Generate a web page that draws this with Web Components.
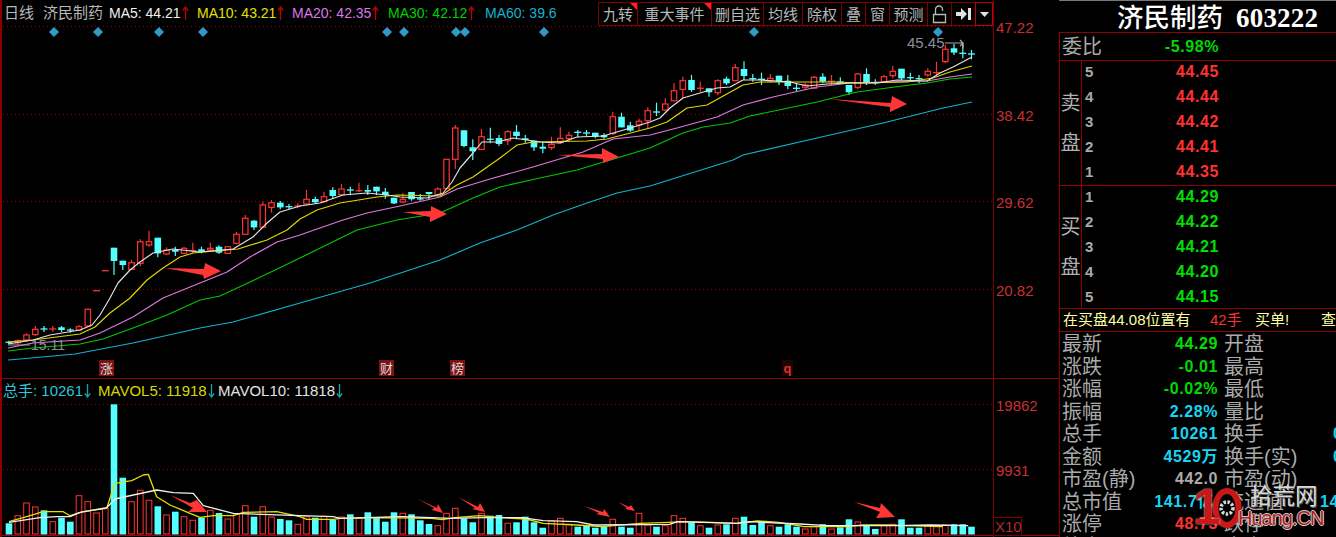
<!DOCTYPE html>
<html lang="zh"><head><meta charset="utf-8"><title>济民制药 603222</title>
<style>html,body{margin:0;padding:0;background:#000;overflow:hidden;height:537px}</style></head>
<body><x-app></x-app>
<script>
const CJK='"Liberation Sans","Noto Sans CJK SC",sans-serif';
const NS='http://www.w3.org/2000/svg';
function base(name,css,html){
  customElements.define(name,class extends HTMLElement{
    connectedCallback(){ if(this.shadowRoot)return;
      const r=this.attachShadow({mode:'open'});
      r.innerHTML='<style>'+css+'</style>'+(typeof html==='function'?html(this):html);
    }
  });
}
const STEP=8.75,X0=9; const xi=i=>X0+STEP*i;
const C6=`c 427 427 422 432|r 422 428 418 435|r 405 420 400 425|r 388 404 378 408|c 387 387 378 396|r 387 387 378 396|c 382 390 378 396|c 390 392 385 398|r 380 390 375 392|r 328 378 326 382|r 272 272 272 272|r 212 212 212 212|c 143 183 143 225|c 182 195 182 210|r 188 208 180 210|r 125 190 118 198|r 125 135 92 140|c 113 160 113 172|r 150 162 142 165|c 150 155 140 168|r 145 160 140 162|r 152 152 128 160|c 148 155 140 160|r 145 150 128 155|c 140 158 136 162|r 140 160 138 163|r 103 130 95 133|r 55 103 45 105|c 62 82 60 90|r 15 82 5 85|r 8 22 0 38|c 8 22 3 28|c 20 20 12 28|r 18 18 10 25`;
const C9=`r 298 312 270 315|c 297 307 290 312|r 290 305 275 308|c 270 288 262 296|r 267 284 252 286|c 270 270 260 285|r 272 272 248 276|c 270 275 255 285|c 260 274 260 285|c 275 285 264 296|c 293 310 293 312|r 298 306 280 310|c 276 298 276 302|c 295 299 282 302|c 276 282 276 298|r 267 285 262 287|r 178 266 178 268|r 84 178 75 207|c 91 138 91 142|c 142 154 118 180|r 110 148 87 150|c 118 118 83 130|c 114 132 105 138|r 95 122 90 135|c 95 108 75 118|c 115 120 105 128|c 122 142 122 153|c 140 146 125 160|r 133 143 110 150|r 115 128 82 132|r 106 116 95 122|c 97 97 90 112|c 99 99 90 108|c 98 110 98 115|c 105 112 100 116|r 50 100 35 105|c 50 82 38 82|c 76 92 65 95|r 64 75 56 92|r 32 62 22 85`;
const C10=`c 246 246 218 258|r 222 240 205 242|r 182 212 160 214|r 152 178 140 205|c 150 180 135 186|r 175 175 155 185|c 175 187 175 200|r 152 188 148 195|c 146 160 140 165|r 113 152 102 154|c 117 138 94 150|c 146 146 132 155|c 148 148 128 165|r 145 153 132 158|c 137 155 137 165|c 152 168 135 178|c 175 175 160 184|r 165 172 158 180|r 142 175 138 177|c 140 155 130 160|r 154 154 135 165|c 156 156 142 160|c 165 187 165 195|r 132 172 128 178|c 132 158 115 165|c 156 160 148 164|r 140 155 135 157|r 124 137 108 145|c 116 145 116 150|c 143 143 128 150|c 146 146 135 160|r 124 135 115 140|r 128 128 95 135|r 58 95 45 100|c 55 68 42 75|c 70 70 40 85|c 72 72 60 88`;
function parse(s,off){return s.split('|').map(r=>{const p=r.split(' ');return{t:p[0],a:off+p[1]/3,b:off+p[2]/3,h:off+p[3]/3,l:off+p[4]/3}})}
const CANDLES=[...parse(C6,200),...parse(C9,100),...parse(C10,30)];
const VOL=[445,422,384,396,406,440,428,440,362,380,414,400,88,308,380,346,376,394,420,410,425,436,428,406,414,432,416,392,425,395,426,432,436,448,425,428,424,434,426,418,430,412,428,440,412,
415,418,436,447,452,415,400,430,442,415,422,420,445,442,425,442,458,438,430,448,455,450,458,455,433,455,458,415,450,455,452,422,430,442,452,458,450,448,430,425,450,440,452,455,448,455,462,455,448,462,457,433,441,452,462,452,448,433,458,458,452,455,450,448,448,455];
const RED='#ff3232',CY='#54ffff';
const pts=a=>a.map(p=>p.join(',')).join(' ');
function z(list,sx,ox,sy,oy){const o=[];for(let i=0;i<list.length;i+=2)o.push([+(ox+list[i]/sx).toFixed(1),+(oy+list[i+1]/sy).toFixed(1)]);return o}
function poly(points,color,w){return `<polyline points="${pts(points)}" fill="none" stroke="${color}" stroke-width="${w||1.15}" stroke-linejoin="round"/>`}
function arrow(p,c){return `<polygon points="${pts(p)}" fill="${c||'#ff3636'}"/>`}
function dotted(y){return `<line x1="3" x2="993" y1="${y}" y2="${y}" stroke="#900000" stroke-width="1" stroke-dasharray="1 3"/>`}
const up=c=>`<svg style="position:static;display:inline-block;vertical-align:-2px;margin-left:1px" width="7" height="14" viewBox="0 0 7 14"><path d="M3.500 1V14M.8 4.500 3.500 1l2.700 3.500" fill="none" stroke="${c}" stroke-width="1.300"/></svg>`;
const down=c=>`<svg style="position:static;display:inline-block;vertical-align:-2px;margin-left:1px" width="7" height="14" viewBox="0 0 7 14"><path d="M3.500 0V13M.8 9.500 3.500 13l2.700-3.500" fill="none" stroke="${c}" stroke-width="1.300"/></svg>`;
const MA={
 w:[[8,344],[33,340],[50,335],[80,330],[92,325],[100,315],[110,298],[118,283],[130,270],[140,262],[153,253],[173,249],[200,252],[233,249],[253,237],[267,223],[280,212],[300,206],[320,203],[343,195],[367,193],[387,195],[400,197],[427,198],[443,193],[452,182],[460,168],[473,153],[482,142],[497,142],[513,138],[527,140],[540,142],[560,143],[577,137],[603,136],[617,132],[650,122],[660,118],[670,108],[683,98],[700,93],[717,88],[730,87],[743,80],[760,80],[790,82],[807,86],[827,84],[850,83],[877,83],[897,80],[927,81],[940,73],[953,67],[972,57]],
 y:[[8,342],[33,340],[80,334],[95,327],[110,313],[130,298],[147,280],[163,268],[180,257],[193,253],[238,249],[267,240],[287,230],[300,219],[317,210],[340,203],[377,197],[397,195],[440,196],[457,185],[473,177],[500,158],[517,145],[533,142],[587,141],[607,139],[650,128],[667,122],[687,108],[707,105],[743,85],[760,82],[800,82],[833,82],[863,83],[907,82],[933,78],[950,72],[972,66]],
 m:[[8,348],[33,343],[80,340],[100,333],[133,317],[163,298],[200,283],[227,272],[250,257],[277,242],[300,235],[317,229],[343,220],[367,213],[400,206],[440,197],[457,189],[490,179],[533,167],[563,158],[583,152],[613,139],[650,135],[677,128],[717,117],[743,105],[773,97],[817,87],[850,83],[883,82],[927,81],[950,77],[972,74]],
 g:[[8,351],[33,348],[80,344],[103,339],[133,328],[167,315],[200,300],[220,296],[250,282],[300,258],[357,230],[397,220],[440,213],[473,198],[500,187],[540,178],[577,170],[617,158],[650,148],[683,133],[703,127],[730,123],[750,116],[817,102],[857,92],[910,85],[927,83],[950,79],[972,77]],
 c:[[8,360],[20,359],[75,354],[133,343],[200,328],[233,322],[300,303],[370,283],[440,260],[480,243],[517,230],[553,215],[587,203],[617,193],[650,186],[733,160],[743,155],[817,138],[883,123],[943,108],[972,102]]
};
function candleSvg(){
 let s='';
 CANDLES.forEach((c,i)=>{
  const x=+xi(i).toFixed(1), col=c.t==='r'?RED:CY;
  if(c.h<c.a-.1||c.l>c.b+.1) s+=`<line x1="${x}" x2="${x}" y1="${c.h.toFixed(1)}" y2="${c.l.toFixed(1)}" stroke="${col}" stroke-width="1.2"/>`;
  if(c.b-c.a<1){ s+=`<line x1="${x-3.5}" x2="${x+3.5}" y1="${c.a.toFixed(1)}" y2="${c.a.toFixed(1)}" stroke="${col}" stroke-width="1.3"/>`; }
  else if(c.t==='r') s+=`<rect x="${x-2.7}" y="${c.a.toFixed(1)}" width="5.4" height="${(c.b-c.a).toFixed(1)}" fill="#000" stroke="${col}" stroke-width="1.2"/>`;
  else s+=`<rect x="${x-3.3}" y="${c.a.toFixed(1)}" width="6.6" height="${(c.b-c.a).toFixed(1)}" fill="${col}"/>`;
 });
 return s;
}
function klineSvg(){
 const dia=[54,98,159,203,387,404,456,465,544,754,938].map(x=>`<polygon points="${x},27 ${x+5},32 ${x},37 ${x-5},32" fill="#2e9bc9"/>`).join('');
 return `<svg xmlns="${NS}" width="1059" height="378" viewBox="0 0 1059 378">
 ${[26.5,114.5,201.5,289.5].map(dotted).join('')}
 ${dia}
 ${candleSvg()}
 ${poly(MA.c,'#12b4cc')}${poly(MA.g,'#00c800')}${poly(MA.m,'#e078e0')}${poly(MA.y,'#e0d800')}${poly(MA.w,'#e4e4e4')}
 ${arrow([[165,268],[204,269],[205,263],[221,271],[204,279],[203,275]])}
 ${arrow([[403,212],[431,211],[431,206],[447,214],[430,222],[430,217]])}
 ${arrow([[557,155],[602,154],[602,148],[619,157],[603,163],[603,159]])}
 ${arrow([[829,99],[891,103],[892,96],[907,104],[890,112],[890,107]])}
 <line x1="993.5" x2="993.5" y1="0" y2="378" stroke="#800000"/>
 <line x1="8" x2="30" y1="345" y2="345" stroke="#9a9a9a" stroke-width="1"/>
 <text x="31" y="350" fill="#8f8f8f" font-family="Liberation Sans" font-size="14">15.11</text>
 <text x="907" y="48" fill="#8a8f9e" font-family="Liberation Sans" font-size="15">45.45</text>
 <path d="M945 43H963M960 40l3 3-3 3M963 43v5" fill="none" stroke="#a8a8a8" stroke-width="1.2"/>
 <g font-family="Liberation Sans" font-size="15" fill="#c83030">
  <text x="996" y="33">47.22</text><text x="996" y="120.5">38.42</text><text x="996" y="207.5">29.62</text><text x="996" y="295.5">20.82</text>
 </g>
 </svg>`;
}
function volSvg(){
 let s='';
 VOL.forEach((t,i)=>{
  const x=+xi(i).toFixed(1), top=375+t/3, r=CANDLES[i].t==='r';
  s+= r? `<rect x="${x-2.8}" y="${top.toFixed(1)}" width="5.6" height="${(534-top).toFixed(1)}" fill="#000" stroke="${RED}" stroke-width="1"/>`
       : `<rect x="${x-3.3}" y="${top.toFixed(1)}" width="6.6" height="${(534.5-top).toFixed(1)}" fill="${CY}"/>`;
 });
 const y1=z([27,440,80,425,130,410,190,410,210,422,250,410,320,400,345,325,395,317,430,300,445,298,470,365,510,390,570,415,600,427,640,422,700,422,730,412,830,410,900,425,920,433,1000,433,1020,430,1140,428],3,0,3,375);
 const y2=z([75,430,100,434,130,428,190,422,240,428,300,432,340,445,420,450,480,455,570,445,640,442,670,440,740,442,800,445,850,438,900,442,960,455,1060,455,1100,450,1160,450,1200,452,1290,455],2.376,400,3,375);
 const w1=z([27,442,120,428,170,425,210,425,240,412,320,398,345,372,400,360,470,345,520,353,580,355,610,392,700,415,900,422,1000,425,1020,430,1200,425],3,0,3,375);
 const w2=z([7,425,75,428,120,430,200,428,290,428,340,437,420,440,460,450,640,448,660,440,800,445,830,440,950,447,1015,452,1080,452,1180,452,1260,450,1350,452],2.376,400,3,375);
 return `<svg xmlns="${NS}" width="1059" height="158" viewBox="0 379 1059 158">
 ${dotted(404.5)}${dotted(469.5)}${s}
 ${poly([...y1,...y2],'#e6e000',1.3)}${poly([...w1,...w2],'#f0f0f0',1.3)}
 ${arrow([[170,495],[190,503],[197,500],[207,512],[188,512],[193,508]])}
 ${arrow([[418,499],[437,508],[438,504],[443,513],[432,510],[434,508]])}
 ${arrow([[458,497],[478,507],[480,503],[485,512],[472,509],[475,508]])}
 ${arrow([[584,506],[603,512],[604,509],[610,517],[596,514],[599,513]])}
 ${arrow([[618,502],[629,507],[631,505],[635,511],[625,509],[627,508]])}
 ${arrow([[854,502],[880,508],[881,503],[895,517],[876,518],[880,512]])}
 <line x1="993.5" x2="993.5" y1="379" y2="537" stroke="#800000"/>
 <line x1="0" x2="1059" y1="535.5" y2="535.5" stroke="#a00000"/>
 <g font-family="Liberation Sans" font-size="15" fill="#c83030"><text x="996" y="411">19862</text><text x="996" y="476">9931</text></g>
 <rect x="993.5" y="517.5" width="28" height="18" fill="none" stroke="#800000"/>
 <text x="995" y="532" font-family="Liberation Sans" font-size="15" fill="#a83030">X10</text>
 </svg>`;
}
base('x-toolbar',`:host{display:flex;height:24px;box-sizing:border-box;border:1px solid #800000;background:#000}`,'<slot></slot>');
base('x-tool',`:host{display:flex;align-items:center;justify-content:center;box-sizing:border-box;height:100%;border-right:1px solid #800000;position:relative;font:15px/1 ${CJK};color:#b8b8b8;white-space:nowrap}
 :host([flag])::after{content:"";position:absolute;right:0;top:0;border-top:7px solid #ff2020;border-left:7px solid transparent}
 :host([last]){border:1px solid #c00000;margin:-1px;height:24px}`,'<slot></slot>');
base('x-mark',`:host{position:absolute;display:flex;align-items:center;justify-content:center;width:15px;height:16px;top:360px;background:#7a1212;font:13px/1 ${CJK};color:#d8d8d8}`,'<slot></slot>');
base('x-kline',`:host{display:block;position:relative;height:378px;border-bottom:1px solid #900000;overflow:hidden}
 svg{position:absolute;left:0;top:0;display:block}
 .bar{position:relative;display:flex;justify-content:space-between;height:26px;padding:2px 66px 0 0;box-sizing:border-box}
 .leg{position:relative;flex:1;font:14px/22px ${CJK};white-space:nowrap}
 .leg span{position:absolute;top:0}
 .edge{position:absolute;left:0;top:0;bottom:0;width:2px;background:#8a0000}`,
 ()=>klineSvg()+`<div class="edge"></div><div class="bar"><div class="leg">
 <span style="left:4px;color:#b8b8b8;font-size:15px">日线</span><span style="left:43px;color:#b8b8b8;font-size:15px">济民制药</span>
 <span style="left:109px;color:#f0f0f0">MA5: 44.21${up('#c00000')}</span>
 <span style="left:197px;color:#e6e000">MA10: 43.21${up('#c00000')}</span>
 <span style="left:292px;color:#d878e8">MA20: 42.35${up('#c00000')}</span>
 <span style="left:388px;color:#00d000">MA30: 42.12${up('#c00000')}</span>
 <span style="left:485px;color:#14b4d0">MA60: 39.6</span></div>
 <x-toolbar>
  <x-tool flag style="width:39px">九转</x-tool><x-tool flag style="width:74px">重大事件</x-tool><x-tool style="width:52px">删自选</x-tool>
  <x-tool style="width:39px">均线</x-tool><x-tool style="width:39px">除权</x-tool><x-tool style="width:24px">叠</x-tool><x-tool style="width:24px">窗</x-tool><x-tool style="width:38px">预测</x-tool>
  <x-tool style="width:24px"><svg style="position:static" width="15" height="19" viewBox="0 0 15 19"><path d="M3.500 9V4.500a3.500 3.500 0 0 1 7 0V6M1.500 9.500h12v8h-12z" fill="none" stroke="#b8b8b8" stroke-width="1.3"/></svg></x-tool>
  <x-tool style="width:24px"><svg style="position:static" width="15" height="12" viewBox="0 0 15 12"><path d="M0 4h5V0l6 6-6 6V8H0zM12 0h3v12h-3z" fill="#e0e0e0"/></svg></x-tool>
  <x-tool last style="width:18px"><svg style="position:static" width="9" height="5" viewBox="0 0 9 5"><path d="M0 0h9L4.500 5z" fill="#e0e0e0"/></svg></x-tool>
 </x-toolbar></div>
 <x-mark style="left:99px">涨</x-mark><x-mark style="left:379px">财</x-mark><x-mark style="left:450px">榜</x-mark>
 <x-mark style="left:782px;width:11px;background:#200303;color:#e03030;font-weight:700">q</x-mark>`);
base('x-volume',`:host{display:block;position:relative;height:158px;overflow:hidden}
 svg{position:absolute;left:0;top:0;display:block}
 .edge{position:absolute;left:0;top:0;bottom:0;width:2px;background:#8a0000}
 .leg{position:relative;height:24px;font:15px/24px ${CJK};white-space:nowrap}
 .leg span{position:absolute;top:0}`,
 ()=>volSvg()+`<div class="edge"></div><div class="leg">
 <span style="left:3px;color:#30c4dc">总手: 10261${down('#1a9fb0')}</span>
 <span style="left:98px;color:#d8d800">MAVOL5: 11918${down('#1a9fb0')}</span>
 <span style="left:218px;color:#e4e4e4">MAVOL10: 11818${down('#1a9fb0')}</span></div>`);
base('x-quote',`:host{display:flex;align-items:center;height:25px;flex:none;font:700 16px/25px "Liberation Sans",sans-serif;letter-spacing:.6px}
 .n{width:24px;padding-left:3px;box-sizing:border-box;color:#aaa;font-size:15px;letter-spacing:0}
 .p{width:113px;text-align:right}`,
 h=>`<span class="n">${h.getAttribute('n')}</span><span class="p" style="color:${h.getAttribute('c')}">${h.getAttribute('p')}</span>`);
base('x-book',`:host{display:flex;box-sizing:border-box;border-bottom:1px solid #900000}
 .side{width:22px;box-sizing:border-box;border-right:1px solid #900000;display:flex;flex-direction:column;align-items:center;justify-content:center;gap:19px;font:20px/21px ${CJK};color:#b0b0b0}
 .rows{display:flex;flex-direction:column;margin-top:-2px}`,
 h=>`<div class="side"><span>${h.getAttribute('a')}</span><span>盘</span></div><div class="rows"><slot></slot></div>`);
base('x-stat',`:host{display:flex;height:22.5px;align-items:center;font:20px/22px ${CJK};color:#aaa;white-space:nowrap}
 span{flex:none}
 .l{width:62px;padding-left:2px;box-sizing:border-box}
 .v{width:96px;text-align:right;font:700 16px/22px "Liberation Sans","Noto Sans CJK SC",sans-serif;letter-spacing:.6px}
 .l2{margin-left:6px;width:96px}
 .v2{font:700 16px/22px "Liberation Sans",sans-serif;letter-spacing:.6px;color:#18d4f0}`,
 h=>{const g=k=>h.getAttribute(k)||'';return `<span class="l">${g('l')}</span><span class="v" style="color:${g('c')};${g('vp')?'padding-right:'+g('vp')+'px;width:'+(96-g('vp'))+'px':''}">${g('v')}</span><span class="l2">${g('l2')}</span><span class="v2" style="margin-left:${g('o')||0}px">${g('v2')}</span>`});
base('x-watermark',`:host{position:absolute;left:1193px;top:485px;width:132px;height:44px;display:block}
 .one{position:absolute;left:0;top:-3px;font:900 50px/50px "Liberation Sans",sans-serif;color:#c81818;text-shadow:0 0 2px #e8e8e8}
 .ring{position:absolute;left:19px;top:2px}
 .cn{position:absolute;left:57px;top:0;font:22.500px/24px ${CJK};color:#d8d8d8;text-shadow:1px 1px 0 #666;white-space:nowrap}
 .en{position:absolute;left:45px;top:22px;font:20px/22px "Liberation Sans",sans-serif;letter-spacing:-1px;color:#b01c1c;white-space:nowrap;text-shadow:-1px 0 0 #ccc,1px 0 0 #ccc,0 -1px 0 #ccc,0 1px 0 #ccc}`,
 `<svg class="ring" width="30" height="42" viewBox="0 0 30 42"><ellipse cx="15" cy="21" rx="11.500" ry="17" fill="#000" stroke="#c81818" stroke-width="6"/><circle cx="15" cy="21" r="6" fill="none" stroke="#d8d8d8" stroke-width="3.500" stroke-dasharray="2.500 1.500"/></svg><span class="one">1</span><span class="cn">拾荒网</span><span class="en">Huang.CN</span>`);
base('x-panel',`:host{display:block;width:277px;height:537px;overflow:hidden;box-sizing:border-box;color:#aaa}
 .title{height:32px;box-sizing:border-box;border-top:1px solid #777;padding-left:58px;font:500 26.500px/30px "Noto Sans CJK SC",serif;color:#fff;white-space:nowrap}
 .title b{font:700 27px/30px "Liberation Serif",serif;margin-left:13px;letter-spacing:.2px}
 .body{border-left:1px solid #900000;border-top:1px solid #900000;height:505px;overflow:hidden;box-sizing:border-box}
 .wb{display:flex;align-items:center;height:27px;border-bottom:1px solid #900000;font:20px/26px ${CJK};padding-left:2px;color:#aaa}
 .wb span{width:60px}.wb b{width:97px;text-align:right;font:700 16px/26px "Liberation Sans",sans-serif;letter-spacing:.6px;color:#00d800}
 .msg{position:relative;height:23px;box-sizing:border-box;border-bottom:1px solid #900000;font:15px/22px ${CJK};color:#ffffa0;white-space:nowrap}
 .msg span{position:absolute;top:0}
 .stats{padding-top:1px}`,
 `<div class="title">济民制药<b>603222</b></div><div class="body">
 <div class="wb"><span>委比</span><b>-5.98%</b></div>
 <x-book a="卖" style="height:125px"><x-quote n="5" p="44.45" c="#ff3232"></x-quote><x-quote n="4" p="44.44" c="#ff3232"></x-quote><x-quote n="3" p="44.42" c="#ff3232"></x-quote><x-quote n="2" p="44.41" c="#ff3232"></x-quote><x-quote n="1" p="44.35" c="#ff3232"></x-quote></x-book>
 <x-book a="买" style="height:123px"><x-quote n="1" p="44.29" c="#00e000"></x-quote><x-quote n="2" p="44.22" c="#00e000"></x-quote><x-quote n="3" p="44.21" c="#00e000"></x-quote><x-quote n="4" p="44.20" c="#00e000"></x-quote><x-quote n="5" p="44.15" c="#00e000"></x-quote></x-book>
 <div class="msg"><span style="left:3px">在买盘44.08位置有</span><span style="left:150px;color:#ff3030">42手</span><span style="left:195px">买单!</span><span style="left:261px">查</span></div>
 <div class="stats">
 <x-stat l="最新" v="44.29" c="#00e000" l2="开盘"></x-stat>
 <x-stat l="涨跌" v="-0.01" c="#00d800" l2="最高"></x-stat>
 <x-stat l="涨幅" v="-0.02%" c="#00d800" l2="最低"></x-stat>
 <x-stat l="振幅" v="2.28%" c="#18d4f0" l2="量比"></x-stat>
 <x-stat l="总手" v="10261" c="#18d4f0" l2="换手" v2="0.26%" o="13"></x-stat>
 <x-stat l="金额" v="4529万" c="#18d4f0" l2="换手(实)" v2="0.46%" o="13"></x-stat>
 <x-stat l="市盈(静)" v="442.0" c="#aaa" l2="市盈(动)"></x-stat>
 <x-stat l="总市值" v="141.7亿" c="#18d4f0" vp="4" l2="流通值" v2="141.7亿"></x-stat>
 <x-stat l="涨停" v="48.73" c="#ff3232" l2="跌停"></x-stat>
 <x-stat l="外盘" v="" c="#aaa" l2="内盘"></x-stat>
 </div></div><x-watermark></x-watermark>`);
base('x-app',`:host{display:flex;width:1336px;height:537px;background:#000;overflow:hidden;position:relative}
 .main{width:1059px;flex:none}`,
 `<div class="main"><x-kline></x-kline><x-volume></x-volume></div><x-panel></x-panel>`);
</script></body></html>
